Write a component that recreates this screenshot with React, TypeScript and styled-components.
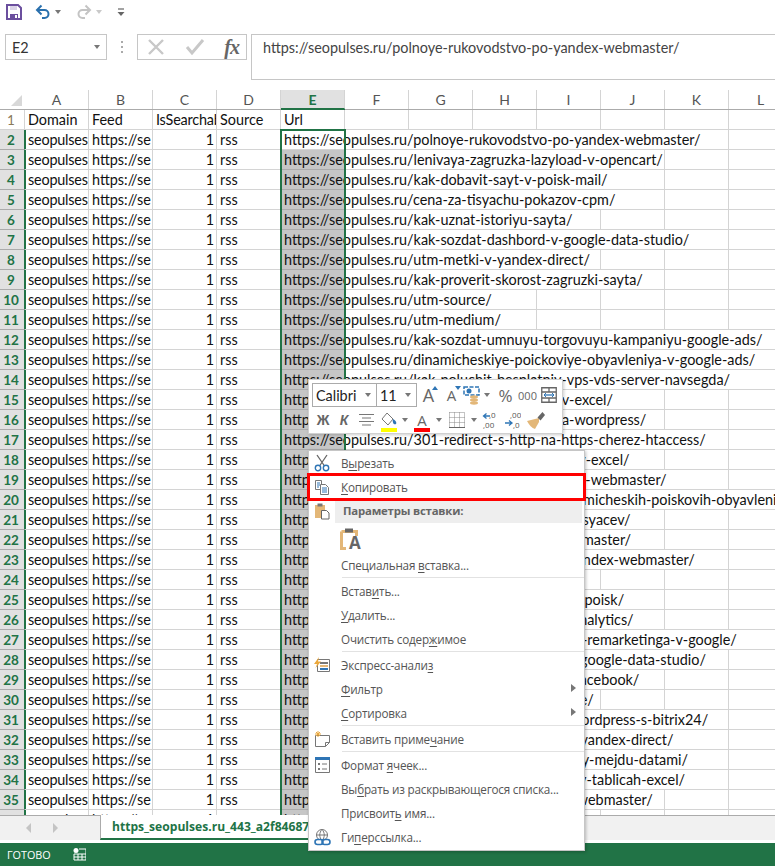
import React from "react";
import styled, { createGlobalStyle } from "styled-components";

const GREEN = "#217346";
const GRID = "#d4d4d4";
const CELL_FONT = `Lato, "Liberation Sans", sans-serif`;
const UI_FONT = `"Open Sans", "Noto Sans", sans-serif`;

const GlobalStyle = createGlobalStyle`
    html, body {
        margin: 0;
        padding: 0;
        background: #fff;
    }
`;

const Page = styled.div`
    position: relative;
    width: 775px;
    height: 866px;
    overflow: hidden;
    background: #fff;
    display: flex;
    flex-direction: column;
    font-family: ${CELL_FONT};
`;

/* quick access */
const QuickBar = styled.div`
    height: 34px;
    display: flex;
    align-items: flex-start;
    padding: 4px 0 0 5px;
    box-sizing: border-box;
`;
const QuickSlot = styled.div<{ $w: number }>`
    width: ${p => p.$w}px;
    height: 16px;
    display: flex;
    align-items: center;
    justify-content: center;
    flex: none;
`;

/* formula bar */
const FormulaRow = styled.div`
    height: 56px;
    display: flex;
    align-items: flex-start;
    padding-left: 5px;
    box-sizing: border-box;
`;
const NameBox = styled.div`
    width: 102px;
    height: 26px;
    border: 1px solid #c6c6c6;
    box-sizing: border-box;
    display: flex;
    align-items: center;
    justify-content: space-between;
    padding: 0 6px 0 6px;
    font-size: 14.4px;
    color: #333;
`;
const Grip = styled.div`
    width: 30px;
    height: 26px;
    display: flex;
    flex-direction: column;
    align-items: center;
    justify-content: center;
    gap: 3px;
    flex: none;
    i {
        width: 2px;
        height: 2px;
        background: #aaa;
        display: block;
    }
`;
const FxButtons = styled.div`
    width: 110px;
    height: 26px;
    border: 1px solid #c6c6c6;
    box-sizing: border-box;
    display: flex;
    align-items: center;
    justify-content: space-between;
    padding: 0 7px 0 9px;
    flex: none;
`;
const FxMark = styled.span`
    font-family: "Liberation Serif", serif;
    font-style: italic;
    font-weight: 700;
    font-size: 20px;
    color: #666;
    letter-spacing: -1px;
`;
const FormulaInput = styled.div`
    margin-left: 4px;
    flex: 1;
    height: 46px;
    border: 1px solid #c6c6c6;
    border-right: none;
    box-sizing: border-box;
    padding: 3px 0 0 11px;
    font-family: ${CELL_FONT};
    font-size: 14.4px;
    line-height: 20px;
    color: #444;
    white-space: nowrap;
`;

/* sheet */
const Sheet = styled.div`
    height: 725px;
    overflow: hidden;
    flex: none;
`;
const RowGrid = styled.div`
    display: grid;
    grid-template-columns: 25px repeat(12, 64px);
    width: 793px;
`;
const HeaderRow = styled(RowGrid)`
    height: 20px;
    box-sizing: border-box;
    border-bottom: 1px solid #ababab;
`;
const Corner = styled.div`
    display: flex;
    align-items: flex-end;
    justify-content: flex-end;
    padding: 0 3px 3px 0;
    box-sizing: border-box;
`;
const ColHead = styled.div<{ $active?: boolean }>`
    font-size: 14px;
    line-height: 19px;
    text-align: center;
    color: ${p => (p.$active ? GREEN : "#555")};
    font-weight: ${p => (p.$active ? 700 : 400)};
    background: ${p => (p.$active ? "#e1e1e1" : "transparent")};
    border-right: 1px solid ${GRID};
    box-shadow: ${p => (p.$active ? `0 1px 0 ${GREEN}` : "none")};
    border-bottom: ${p => (p.$active ? `1px solid ${GREEN}` : "none")};
    height: 19px;
    box-sizing: border-box;
    position: relative;
`;
const DataRow = styled(RowGrid)`
    height: 20px;
`;
const RowHead = styled.div<{ $active?: boolean }>`
    height: 20px;
    box-sizing: border-box;
    text-align: center;
    font-size: 13.5px;
    line-height: 20px;
    padding-right: 2px;
    color: ${p => (p.$active ? GREEN : "#8a7a5a")};
    font-weight: ${p => (p.$active ? 700 : 400)};
    background: ${p => (p.$active ? "#e1e1e1" : "transparent")};
    border-bottom: 1px solid ${p => (p.$active ? "#ababab" : GRID)};
    border-right: ${p => (p.$active ? `2px solid ${GREEN}` : `1px solid ${GRID}`)};
    margin-right: ${p => (p.$active ? -1 : 0)}px;
`;
const Cell = styled.div<{ $right?: boolean; $span?: number; $tight?: boolean }>`
    grid-column: span ${p => p.$span || 1};
    height: 20px;
    box-sizing: border-box;
    border-right: 1px solid ${GRID};
    border-bottom: 1px solid ${GRID};
    padding: 0 ${p => (p.$right ? 2 : 0)}px 0 ${p => (p.$right ? 0 : 3)}px;
    font-size: 14.4px;
    line-height: 20px;
    letter-spacing: ${p => (p.$tight ? "-0.2px" : "normal")};
    color: #111;
    overflow: hidden;
    white-space: nowrap;
    text-align: ${p => (p.$right ? "right" : "left")};
`;
const UrlCell = styled.div<{ $active?: boolean }>`
    position: relative;
    height: 20px;
    box-sizing: border-box;
    border-bottom: 1px solid ${p => (p.$active ? GRID : "#ababab")};
    background: ${p => (p.$active ? "#fff" : "#c6c6c6")};
    padding-left: 3px;
    font-size: 14.4px;
    line-height: 20px;
    color: #111;
    white-space: nowrap;
    &::after {
        content: "";
        position: absolute;
        left: -1px;
        width: 66px;
        top: ${p => (p.$active ? -1 : 0)}px;
        bottom: -1px;
        box-sizing: border-box;
        border-left: 2px solid ${GREEN};
        border-right: 2px solid ${GREEN};
        border-top: ${p => (p.$active ? `2px solid ${GREEN}` : "none")};
    }
`;

/* tabs + status */
const TabStrip = styled.div`
    height: 25px;
    flex: none;
    background: #f1f1f1;
    border-top: 1px solid #ababab;
    box-sizing: border-box;
    display: flex;
`;
const TabNav = styled.div`
    width: 100px;
    display: flex;
    align-items: center;
    padding-left: 26px;
    gap: 22px;
    box-sizing: border-box;
    flex: none;
`;
const NavArrow = styled.i<{ $right?: boolean }>`
    width: 0;
    height: 0;
    border-top: 5px solid transparent;
    border-bottom: 5px solid transparent;
    ${p => (p.$right ? "border-left: 5px solid #c4c4c4;" : "border-right: 5px solid #c4c4c4;")}
`;
const Tab = styled.div`
    background: #fff;
    margin-top: -1px;
    height: 25px;
    width: 260px;
    flex: none;
    box-sizing: border-box;
    border-left: 1px solid #ababab;
    border-bottom: 2px solid ${GREEN};
    padding-left: 11px;
    font-family: ${UI_FONT};
    font-weight: 700;
    font-size: 12.1px;
    line-height: 24px;
    color: ${GREEN};
    white-space: nowrap;
    overflow: hidden;
`;
const StatusBar = styled.div`
    margin-top: 3px;
    height: 23px;
    background: ${GREEN};
    display: flex;
    align-items: center;
    flex: none;
    padding-left: 7px;
    gap: 22px;
    color: #fff;
    font-family: ${UI_FONT};
    font-size: 10.8px;
`;

/* mini toolbar */
const MiniBar = styled.div`
    position: absolute;
    left: 308px;
    top: 379px;
    width: 255px;
    height: 55px;
    box-sizing: border-box;
    background: #fff;
    border: 1px solid #d0d0d0;
    box-shadow: 1px 1px 3px rgba(0, 0, 0, 0.2);
    padding: 3px 0 0 3px;
    display: flex;
    flex-direction: column;
    gap: 1px;
`;
const MiniRow = styled.div`
    display: flex;
    align-items: center;
    height: 24px;
`;
const FontBox = styled.div<{ $w: number }>`
    width: ${p => p.$w}px;
    height: 24px;
    box-sizing: border-box;
    border: 1px solid #ababab;
    margin-right: -1px;
    display: flex;
    align-items: center;
    justify-content: space-between;
    padding: 0 5px 0 3px;
    font-size: 14.4px;
    color: #222;
    flex: none;
`;
const Slot = styled.div<{ $w: number }>`
    width: ${p => p.$w}px;
    height: 24px;
    display: flex;
    align-items: center;
    justify-content: center;
    flex: none;
    position: relative;
    color: #666;
`;
const Caret = styled.i`
    width: 0;
    height: 0;
    border-left: 3.5px solid transparent;
    border-right: 3.5px solid transparent;
    border-top: 4px solid #777;
`;
const DimCaret = styled(Caret)`
    opacity: 0.4;
`;
const BoldGlyph = styled.span<{ $italic?: boolean }>`
    font-family: "Liberation Sans", sans-serif;
    font-weight: 700;
    font-size: 14px;
    font-style: ${p => (p.$italic ? "italic" : "normal")};
    color: #666;
`;
const Percent = styled.span`
    font-family: ${UI_FONT};
    font-size: 17px;
    color: #666;
`;
const Thousands = styled.span`
    font-family: ${UI_FONT};
    font-size: 11px;
    color: #666;
`;
const BigA = styled.span`
    font-family: ${UI_FONT};
    font-size: 18px;
    line-height: 20px;
    color: #666;
`;
const SmallA = styled(BigA)`
    font-size: 15px;
`;
const PasteA = styled(BigA)`
    font-weight: 700;
    font-size: 17px;
    margin: 9px 0 0 -9px;
`;
const SizeArrow = styled.i<{ $down?: boolean }>`
    position: absolute;
    top: 3px;
    right: ${p => (p.$down ? 1 : 3)}px;
    width: 0;
    height: 0;
    border-left: 3px solid transparent;
    border-right: 3px solid transparent;
    ${p => (p.$down ? "border-top: 4px solid #2e75b5;" : "border-bottom: 4px solid #2e75b5;")}
`;
const ColorBar = styled.b<{ $c: string }>`
    position: absolute;
    bottom: 0;
    left: 50%;
    margin-left: -8px;
    width: 16px;
    height: 4px;
    background: ${p => p.$c};
`;

/* context menu */
const Menu = styled.div`
    position: absolute;
    left: 308px;
    top: 450px;
    width: 277px;
    height: 401px;
    box-sizing: border-box;
    background: #fff;
    border: 1px solid #c6c6c6;
    box-shadow: 1px 1px 3px rgba(0, 0, 0, 0.25);
    font-family: ${UI_FONT};
    font-size: 11.7px;
    letter-spacing: -0.2px;
    color: #555;
`;
const Item = styled.div<{ $marked?: boolean }>`
    position: relative;
    height: 24px;
    display: flex;
    align-items: center;
    outline: ${p => (p.$marked ? "3px solid #f00" : "none")};
    outline-offset: -1px;
    u {
        text-underline-offset: 2px;
    }
`;
const IconCol = styled.div`
    width: 26px;
    height: 24px;
    flex: none;
    display: flex;
    align-items: center;
    justify-content: center;
`;
const Label = styled.span`
    padding-left: 6px;
    white-space: nowrap;
`;
const SubArrow = styled.i`
    position: absolute;
    right: 8px;
    top: 7px;
    width: 0;
    height: 0;
    border-top: 4px solid transparent;
    border-bottom: 4px solid transparent;
    border-left: 5px solid #777;
`;
const Separator = styled.div`
    height: 2px;
    margin-left: 33px;
    background: linear-gradient(#e2e2e2 1px, transparent 1px);
`;
const HeadRow = styled.div`
    height: 24px;
    display: flex;
    align-items: stretch;
`;
const HeadLabel = styled.div`
    flex: 1;
    margin: 1px 2px 0 0;
    background: #eeeeee;
    padding-left: 8px;
    font-weight: 700;
    font-size: 11.4px;
    line-height: 22px;
    color: #666;
`;
const PasteRow = styled.div`
    height: 30px;
    padding-left: 31px;
    display: flex;
    align-items: center;
`;

/* icons */
const Save = () => (
    <svg width="16" height="16" viewBox="0 0 16 16">
        <path d="M1 1h11l3 3v11H1z" fill="none" stroke="#6b4f9e" strokeWidth="2" />
        <path d="M4 2h7v4H4z" fill="#6b4f9e" opacity="0.25" />
        <path d="M4 10h8v5H4z" fill="#6b4f9e" />
        <path d="M9 11h2v3H9z" fill="#fff" />
    </svg>
);
const Undo = ({ color }: { color: string }) => (
    <svg width="16" height="16" viewBox="0 0 16 16">
        <path d="M3 6h6.5a4 4 0 0 1 0 8H7" fill="none" stroke={color} strokeWidth="2" />
        <path d="M6.5 1.5L2 6l4.5 4.5" fill="none" stroke={color} strokeWidth="2" />
    </svg>
);
const Redo = ({ color }: { color: string }) => (
    <svg width="16" height="16" viewBox="0 0 16 16">
        <path d="M13 6H6.500a4 4 0 0 0 0 8H9" fill="none" stroke={color} strokeWidth="2" />
        <path d="M9.500 1.500L14 6l-4.500 4.500" fill="none" stroke={color} strokeWidth="2" />
    </svg>
);
const Customize = () => (
    <svg width="8" height="9" viewBox="0 0 8 9">
        <path d="M1 1h6" stroke="#666" strokeWidth="1.2" />
        <path d="M0.500 4h7L4 8z" fill="#666" />
    </svg>
);
const Cross = () => (
    <svg width="18" height="18" viewBox="0 0 18 18">
        <path d="M2 2l14 14M16 2L2 16" stroke="#c8c8c8" strokeWidth="2.400" />
    </svg>
);
const Check = () => (
    <svg width="20" height="18" viewBox="0 0 20 18">
        <path d="M2 9l5 6L18 2" fill="none" stroke="#c8c8c8" strokeWidth="3" />
    </svg>
);
const CornerMark = () => (
    <svg width="11" height="11" viewBox="0 0 11 11">
        <path d="M11 0v11H0z" fill="#d8d8d8" />
    </svg>
);
const Scissors = () => (
    <svg width="16" height="18" viewBox="0 0 16 18">
        <path d="M3 1l7.500 11M13 1L5.500 12" stroke="#666" strokeWidth="1.300" fill="none" />
        <circle cx="4" cy="14" r="2.700" fill="none" stroke="#2e75b5" strokeWidth="1.400" />
        <circle cx="12" cy="14" r="2.700" fill="none" stroke="#2e75b5" strokeWidth="1.400" />
    </svg>
);
const CopyIcon = () => (
    <svg width="16" height="16" viewBox="0 0 16 16">
        <path d="M1.500 1.500h6v9h-6z" fill="#fff" stroke="#777" />
        <path d="M6.500 5.500h5l3 3v7h-8z" fill="#fff" stroke="#777" />
        <path d="M8 9h5M8 11h5M8 13h5M3 4h3M3 6h3M3 8h2" stroke="#2e75b5" />
    </svg>
);
const Clipboard = () => (
    <svg width="16" height="18" viewBox="0 0 16 18">
        <path d="M1 3h10v13H1z" fill="#e3b778" />
        <path d="M3.500 1.500h5v3h-5z" fill="#777" />
        <path d="M7.500 8.500h5l2.500 2.500v6H7.500z" fill="#fff" stroke="#666" />
    </svg>
);
const PasteLarge = () => (
    <svg width="18" height="23" viewBox="0 0 18 23">
        <path d="M1.500 4.500h15V9M6 21.500H1.500v-17" fill="none" stroke="#e3b778" strokeWidth="3" />
        <path d="M5 1.500h8v4H5z" fill="#666" />
    </svg>
);
const QuickAnalysis = () => (
    <svg width="16" height="16" viewBox="0 0 16 16">
        <path d="M3.500 2.500h12v12h-12z" fill="#fff" stroke="#777" />
        <path d="M6 5h8v2H6z" fill="#777" />
        <path d="M6 8h8v2H6z" fill="#e3b778" />
        <path d="M6 11h8v2H6z" fill="#2e75b5" />
        <path d="M5 0L0 7h3L1.500 11 7 4.500H4z" fill="#eba83c" />
    </svg>
);
const NoteIcon = () => (
    <svg width="16" height="16" viewBox="0 0 16 16">
        <path d="M1.500 4.500h14v7l-4 4h-10z" fill="#fff" stroke="#777" />
        <path d="M11.500 15.500v-4h4" fill="none" stroke="#777" />
        <path d="M4 0v6M1 3h6M2 1l4 4M6 1L2 5" stroke="#eba83c" />
    </svg>
);
const FormatIcon = () => (
    <svg width="15" height="16" viewBox="0 0 15 16">
        <path d="M.500.500h14v15H.500z" fill="#fff" stroke="#777" />
        <path d="M0 0h15v3H0z" fill="#2e75b5" />
        <path d="M3 6h2v2H3zM3 11h2v2H3z" fill="#777" />
        <path d="M7 7h5M7 12h5" stroke="#777" />
    </svg>
);
const LinkIcon = () => (
    <svg width="17" height="17" viewBox="0 0 17 17">
        <circle cx="8" cy="6" r="5.500" fill="none" stroke="#777" />
        <path d="M2.500 6h11M8 .500c-3 3-3 8 0 11M8 .500c3 3 3 8 0 11" fill="none" stroke="#777" />
        <rect x="1" y="10.500" width="8" height="5" rx="2.500" fill="#fff" stroke="#2e75b5" strokeWidth="1.600" />
        <rect x="8" y="10.500" width="8" height="5" rx="2.500" fill="none" stroke="#2e75b5" strokeWidth="1.600" />
    </svg>
);
const SwapFormat = () => (
    <svg width="17" height="19" viewBox="0 0 17 19">
        <path d="M1 1h15v8H1z" fill="none" stroke="#2e75b5" strokeWidth="1.500" strokeDasharray="4 1.500" />
        <circle cx="6" cy="5" r="2.500" fill="#2e75b5" />
        <ellipse cx="11" cy="11" rx="4" ry="1.700" fill="#e3b778" />
        <ellipse cx="11" cy="14" rx="4" ry="1.700" fill="#e3b778" />
        <ellipse cx="11" cy="17" rx="4" ry="1.700" fill="#e3b778" />
    </svg>
);
const WrapIcon = () => (
    <svg width="16" height="16" viewBox="0 0 16 16">
        <path d="M.750.750h14.500v14.500H.750zM1 5h14M1 11h14M8 1v4M8 11v4" fill="none" stroke="#666" strokeWidth="1.300" />
        <path d="M3 8h10" stroke="#2e75b5" strokeWidth="1.300" />
        <path d="M5 6L3 8l2 2M11 6l2 2-2 2" fill="none" stroke="#2e75b5" />
    </svg>
);
const AlignIcon = () => (
    <svg width="15" height="12" viewBox="0 0 15 12">
        <path d="M0 .500h15M3 4h9M0 7.500h15M3 11h9" stroke="#777" />
    </svg>
);
const FillIcon = () => (
    <svg width="18" height="14" viewBox="0 0 18 14">
        <path d="M7 0l6 6-5 6-6-6z" fill="#fff" stroke="#777" />
        <path d="M13 6c2 1 4 3 3 5-2 1-4-1-3-5z" fill="#2e75b5" />
    </svg>
);
const BorderIcon = () => (
    <svg width="16" height="16" viewBox="0 0 16 16">
        <path d="M.500.500h15v15M.500.500v15M5.500.500v15M10.500.500v15M.500 5.500h15M.500 10.500h15" fill="none" stroke="#888" strokeDasharray="1 1" />
        <path d="M0 15.500h16" stroke="#666" />
    </svg>
);
const DecimalIcon = ({ flip }: { flip?: boolean }) => (
    <svg width="16" height="18" viewBox="0 0 16 18">
        <text x={flip ? 5 : 7} y="7" fontFamily="Open Sans, sans-serif" fontSize="8" fill="#555">
            {flip ? ",00" : ",0"}
        </text>
        <text x={flip ? 8 : 1} y="17" fontFamily="Open Sans, sans-serif" fontSize="8" fill="#555">
            {flip ? ",0" : ",00"}
        </text>
        {flip ? (
            <path d="M0 12h6M4 9.500L7 12l-3 2.500" fill="none" stroke="#2e75b5" strokeWidth="1.300" />
        ) : (
            <path d="M8 5H2M4.500 2.500L1.500 5l3 2.500" fill="none" stroke="#2e75b5" strokeWidth="1.300" />
        )}
    </svg>
);
const BrushIcon = () => (
    <svg width="18" height="17" viewBox="0 0 18 17">
        <path d="M12 6L0 9c2 4 5 7 8 8l4-7z" fill="#e3b778" />
        <path d="M10.500 5.500l3 3L18 3l-2.500-3z" fill="#666" />
    </svg>
);
const SheetIcon = () => (
    <svg width="13" height="13" viewBox="0 0 13 13">
        <circle cx="3" cy="2.500" r="2.500" fill="#fff" />
        <path d="M6 1h7v11H1V6h12M1 9h12M5 6v6M9 6v6" fill="none" stroke="#fff" />
    </svg>
);

const P = "https://seopulses.ru/";
// url and how many columns (E included) it runs over before a grid line shows again
const ROWS: [string, number][] = [
    [P + "polnoye-rukovodstvo-po-yandex-webmaster/", 7],
    [P + "lenivaya-zagruzka-lazyload-v-opencart/", 6],
    [P + "kak-dobavit-sayt-v-poisk-mail/", 6],
    [P + "cena-za-tisyachu-pokazov-cpm/", 6],
    [P + "kak-uznat-istoriyu-sayta/", 5],
    [P + "kak-sozdat-dashbord-v-google-data-studio/", 7],
    [P + "utm-metki-v-yandex-direct/", 5],
    [P + "kak-proverit-skorost-zagruzki-sayta/", 6],
    [P + "utm-source/", 4],
    [P + "utm-medium/", 4],
    [P + "kak-sozdat-umnuyu-torgovuyu-kampaniyu-google-ads/", 8],
    [P + "dinamicheskiye-poickoviye-obyavleniya-v-google-ads/", 8],
    [P + "kak-poluchit-besplatniy-vps-vds-server-navsegda/", 8],
    [P + "kak-sdelat-sumu-listov-v-excel/", 6],
    [P + "kak-dobavit-metrikoy-na-wordpress/", 6],
    [P + "301-redirect-s-http-na-https-cherez-htaccess/", 7],
    [P + "kak-otkryt-bolshoy-csv-fl-v-excel/", 6],
    [P + "kak-dobavit-domeni-v-bing-webmaster/", 7],
    [P + "kak-sozdat-shablonov-dinamicheskih-poiskovih-obyavleniy/", 8],
    [P + "kak-uznat-trafiki-za-12-mesyacev/", 6],
    [P + "kak-dobavit-sitemapy-webmaster/", 6],
    [P + "kak-proverit-url-sayta-v-yandex-webmaster/", 7],
    [P + "kak-sozdat-sayt-na-tilda/", 5],
    [P + "kak-dobavit-sayt-v-google-poisk/", 6],
    [P + "kak-nastroit-cely-google-analytics/", 6],
    [P + "kak-nastroit-url-spiski-dlya-remarketinga-v-google/", 8],
    [P + "kak-podklyuchit-dannie-v-google-data-studio/", 7],
    [P + "kak-nastroit-pikselu-dlya-facebook/", 6],
    [P + "kak-nayti-dubli-stroki-sayte/", 5],
    [P + "kak-integrirovat-sayt-na-wordpress-s-bitrix24/", 7],
    [P + "kak-nastroit-kampaniyu-v-yandex-direct/", 7],
    [P + "kak-poschitat-chislo-v-dney-mejdu-datami/", 7],
    [P + "kak-ubrat-pustie-stroki-iz-v-tablicah-excel/", 7],
    [P + "kak-nayti-oshibku-v-bing-webmaster/", 6],
    [P + "kak-sozdat-sayt-na-tilda/", 5],
];

const COLS = ["A", "B", "C", "D", "E", "F", "G", "H", "I", "J", "K", "L"];

function SheetRow({ num, url, span }: { num: number; url: string; span: number }) {
    const rest = Array.from({ length: 8 - span });
    return (
        <DataRow>
            <RowHead $active>{num}</RowHead>
            <Cell $tight>seopulses</Cell>
            <Cell>https://se</Cell>
            <Cell $right>1</Cell>
            <Cell>rss</Cell>
            <UrlCell $active={num === 2}>{url}</UrlCell>
            <Cell $span={span - 1} />
            {rest.map((_, i) => (
                <Cell key={i} />
            ))}
        </DataRow>
    );
}

function MiniToolbar() {
    return (
        <MiniBar>
            <MiniRow>
                <FontBox $w={65}>
                    Calibri <Caret />
                </FontBox>
                <FontBox $w={41}>
                    11 <Caret />
                </FontBox>
                <Slot $w={25}>
                    <BigA>A</BigA>
                    <SizeArrow />
                </Slot>
                <Slot $w={21}>
                    <SmallA>A</SmallA>
                    <SizeArrow $down />
                </Slot>
                <Slot $w={19}>
                    <SwapFormat />
                </Slot>
                <Slot $w={12}>
                    <Caret />
                </Slot>
                <Slot $w={25}>
                    <Percent>%</Percent>
                </Slot>
                <Slot $w={19}>
                    <Thousands>000</Thousands>
                </Slot>
                <Slot $w={23}>
                    <WrapIcon />
                </Slot>
            </MiniRow>
            <MiniRow>
                <Slot $w={22}>
                    <BoldGlyph>Ж</BoldGlyph>
                </Slot>
                <Slot $w={20}>
                    <BoldGlyph $italic>К</BoldGlyph>
                </Slot>
                <Slot $w={25}>
                    <AlignIcon />
                </Slot>
                <Slot $w={20}>
                    <FillIcon />
                    <ColorBar $c="#ffff00" />
                </Slot>
                <Slot $w={12}>
                    <Caret />
                </Slot>
                <Slot $w={22}>
                    <SmallA>A</SmallA>
                    <ColorBar $c="#f00" />
                </Slot>
                <Slot $w={12}>
                    <Caret />
                </Slot>
                <Slot $w={24}>
                    <BorderIcon />
                </Slot>
                <Slot $w={9}>
                    <Caret />
                </Slot>
                <Slot $w={23}>
                    <DecimalIcon />
                </Slot>
                <Slot $w={23}>
                    <DecimalIcon flip />
                </Slot>
                <Slot $w={24}>
                    <BrushIcon />
                </Slot>
            </MiniRow>
        </MiniBar>
    );
}

function ContextMenu() {
    return (
        <Menu>
            <Item>
                <IconCol>
                    <Scissors />
                </IconCol>
                <Label>
                    В<u>ы</u>резать
                </Label>
            </Item>
            <Item $marked>
                <IconCol>
                    <CopyIcon />
                </IconCol>
                <Label>
                    <u>К</u>опировать
                </Label>
            </Item>
            <HeadRow>
                <IconCol>
                    <Clipboard />
                </IconCol>
                <HeadLabel>Параметры вставки:</HeadLabel>
            </HeadRow>
            <PasteRow>
                <PasteLarge />
                <PasteA>A</PasteA>
            </PasteRow>
            <Item>
                <IconCol />
                <Label>
                    Специальная <u>в</u>ставка...
                </Label>
            </Item>
            <Separator />
            <Item>
                <IconCol />
                <Label>
                    Встав<u>и</u>ть...
                </Label>
            </Item>
            <Item>
                <IconCol />
                <Label>
                    <u>У</u>далить...
                </Label>
            </Item>
            <Item>
                <IconCol />
                <Label>
                    Очистить содер<u>ж</u>имое
                </Label>
            </Item>
            <Separator />
            <Item>
                <IconCol>
                    <QuickAnalysis />
                </IconCol>
                <Label>
                    Экспресс-анали<u>з</u>
                </Label>
            </Item>
            <Item>
                <IconCol />
                <Label>
                    <u>Ф</u>ильтр
                </Label>
                <SubArrow />
            </Item>
            <Item>
                <IconCol />
                <Label>
                    <u>С</u>ортировка
                </Label>
                <SubArrow />
            </Item>
            <Separator />
            <Item>
                <IconCol>
                    <NoteIcon />
                </IconCol>
                <Label>
                    Вставить приме<u>ч</u>ание
                </Label>
            </Item>
            <Separator />
            <Item>
                <IconCol>
                    <FormatIcon />
                </IconCol>
                <Label>
                    Формат <u>я</u>чеек...
                </Label>
            </Item>
            <Item>
                <IconCol />
                <Label>
                    Вы<u>б</u>рать из раскрывающегося списка...
                </Label>
            </Item>
            <Item>
                <IconCol />
                <Label>
                    Присвоит<u>ь</u> имя...
                </Label>
            </Item>
            <Item>
                <IconCol>
                    <LinkIcon />
                </IconCol>
                <Label>
                    Ги<u>п</u>ерссылка...
                </Label>
            </Item>
        </Menu>
    );
}

export default function App() {
    return (
        <Page>
            <GlobalStyle />
            <QuickBar>
                <QuickSlot $w={17}>
                    <Save />
                </QuickSlot>
                <QuickSlot $w={12} />
                <QuickSlot $w={18}>
                    <Undo color="#2a70ad" />
                </QuickSlot>
                <QuickSlot $w={12}>
                    <Caret />
                </QuickSlot>
                <QuickSlot $w={11} />
                <QuickSlot $w={18}>
                    <Redo color="#c4c4c4" />
                </QuickSlot>
                <QuickSlot $w={12}>
                    <DimCaret />
                </QuickSlot>
                <QuickSlot $w={10} />
                <QuickSlot $w={12}>
                    <Customize />
                </QuickSlot>
            </QuickBar>
            <FormulaRow>
                <NameBox>
                    E2 <Caret />
                </NameBox>
                <Grip>
                    <i />
                    <i />
                    <i />
                </Grip>
                <FxButtons>
                    <Cross />
                    <Check />
                    <FxMark>fx</FxMark>
                </FxButtons>
                <FormulaInput>https://seopulses.ru/polnoye-rukovodstvo-po-yandex-webmaster/</FormulaInput>
            </FormulaRow>
            <Sheet>
                <HeaderRow>
                    <Corner>
                        <CornerMark />
                    </Corner>
                    {COLS.map(c => (
                        <ColHead key={c} $active={c === "E"}>
                            {c}
                        </ColHead>
                    ))}
                </HeaderRow>
                <DataRow>
                    <RowHead>1</RowHead>
                    <Cell>Domain</Cell>
                    <Cell>Feed</Cell>
                    <Cell $tight>IsSearchable</Cell>
                    <Cell>Source</Cell>
                    <Cell>Url</Cell>
                    {COLS.slice(5).map(c => (
                        <Cell key={c} />
                    ))}
                </DataRow>
                {ROWS.map(([url, span], i) => (
                    <SheetRow key={i} num={i + 2} url={url} span={span} />
                ))}
            </Sheet>
            <TabStrip>
                <TabNav>
                    <NavArrow />
                    <NavArrow $right />
                </TabNav>
                <Tab>https_seopulses.ru_443_a2f84687</Tab>
            </TabStrip>
            <StatusBar>
                ГОТОВО
                <SheetIcon />
            </StatusBar>
            <MiniToolbar />
            <ContextMenu />
        </Page>
    );
}
